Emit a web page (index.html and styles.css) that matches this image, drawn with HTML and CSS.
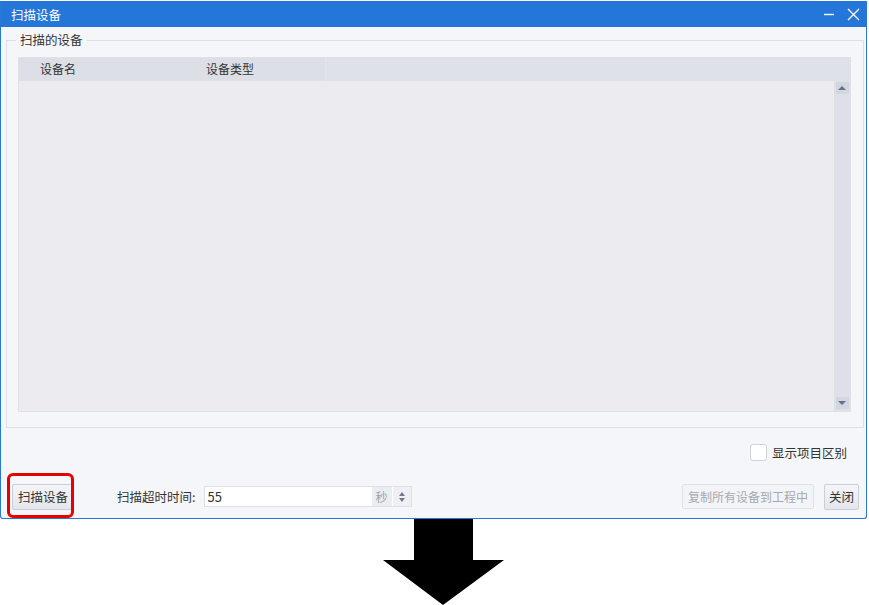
FILE: index.html
```html
<!DOCTYPE html>
<html lang="zh-CN">
<head>
  <meta charset="UTF-8">
  <title>扫描设备</title>
  <link rel="stylesheet" href="styles.css">
</head>
<body>
  <div class="window">
    <div class="titlebar">
      <span class="title">扫描设备</span>
      <div class="title-buttons">
        <svg width="12" height="12" viewBox="0 0 12 12"><path d="M1 6.5h10" stroke="#fff" stroke-width="1.4"/></svg>
        <svg width="13" height="13" viewBox="0 0 13 13"><path d="M1 1l11 11M12 1L1 12" stroke="#fff" stroke-width="1.3"/></svg>
      </div>
    </div>

    <div class="content">
      <fieldset class="group">
        <legend>扫描的设备</legend>
        <div class="table">
          <div class="table-head">
            <div class="col col-name">设备名</div>
            <div class="col col-type">设备类型</div>
            <div class="col col-rest"></div>
          </div>
          <div class="table-body">
            <div class="rows"></div>
            <div class="scrollbar">
              <div class="scroll-btn"><span class="tri-up"></span></div>
              <div class="scroll-btn"><span class="tri-down"></span></div>
            </div>
          </div>
        </div>
      </fieldset>

      <div class="check-row">
        <label class="check"><span class="box"></span>显示项目区别</label>
      </div>

      <div class="footer">
        <div class="scan-wrap">
          <button class="btn">扫描设备</button>
          <div class="highlight"></div>
        </div>
        <span class="timeout-label">扫描超时时间:</span>
        <div class="spin">
          <span class="spin-value">55</span>
          <span class="spin-unit">秒</span>
          <span class="spin-arrows"><span class="tri-up small"></span><span class="tri-down small"></span></span>
        </div>
        <div class="spacer"></div>
        <button class="btn disabled">复制所有设备到工程中</button>
        <button class="btn close">关闭</button>
      </div>
    </div>
  </div>

  <div class="arrow">
    <svg width="122" height="86" viewBox="0 0 122 86">
      <polygon points="31,0 90,0 90,41 121,41 60,86 0,41 31,41" fill="#000"/>
    </svg>
  </div>
</body>
</html>
```

FILE: styles.css
```css
body {
  margin: 0;
  background: #fff;
  font-family: "Noto Sans CJK SC", "Noto Sans", sans-serif;
  font-size: 12px;
  color: #333;
}
.window {
  width: 865px;
  height: 517px;
  border: 1px solid #2a78d6;
  border-top: none;
  border-radius: 0 0 3px 3px;
  background: #f5f6fa;
  margin-top: 1px;
}
.titlebar {
  height: 26px;
  background: #2477d8;
  color: #fff;
  display: flex;
  align-items: center;
  padding: 0 6px 0 10px;
}
.title {
  font-size: 12.5px;
  flex: 1;
}
.title-buttons {
  display: flex;
  align-items: center;
  gap: 12px;
}
.content {
  padding: 5px 2px 0 5px;
}
.group {
  margin: 0;
  border: 1px solid #dde0e6;
  padding: 9px 12px 15px 11px;
}
.group legend {
  padding: 0 4px;
  margin-left: -2px;
  line-height: 16px;
  font-size: 12.5px;
}
.table {
  height: 355px;
  display: flex;
  flex-direction: column;
  border: 1px solid #dfe1e7;
  box-sizing: border-box;
}
.table-head {
  height: 23px;
  display: flex;
  background: #dcdfe6;
  line-height: 22px;
}
.col {
  box-sizing: border-box;
}
.col-name {
  width: 177px;
  padding-left: 21px;
}
.col-type {
  width: 130px;
  padding-left: 10px;
  border-right: 1px solid #e4e6ec;
}
.col-rest {
  flex: 1;
  background: #dee1e8;
}
.table-body {
  flex: 1;
  display: flex;
  background: #ecebef;
}
.rows {
  flex: 1;
}
.scrollbar {
  width: 16px;
  background: #dde0e8;
  display: flex;
  flex-direction: column;
  justify-content: space-between;
  align-items: center;
  padding: 1px 0 2px;
}
.scroll-btn {
  width: 13px;
  height: 12px;
  background: #d2d6df;
  display: flex;
  align-items: center;
  justify-content: center;
}
.tri-up,
.tri-down {
  width: 0;
  height: 0;
  border-left: 4px solid transparent;
  border-right: 4px solid transparent;
}
.tri-up {
  border-bottom: 4px solid #66708a;
}
.tri-down {
  border-top: 4px solid #66708a;
}
.check-row {
  display: flex;
  justify-content: flex-end;
  padding: 16px 17px 0 0;
  height: 17px;
}
.check {
  display: flex;
  align-items: center;
  gap: 5px;
  font-size: 12.5px;
}
.box {
  width: 15px;
  height: 15px;
  background: #fff;
  border: 1px solid #cfd3db;
  border-radius: 3px;
}
.footer {
  display: flex;
  align-items: center;
  margin-top: 22px;
  height: 27px;
  padding-right: 5px;
}
.scan-wrap {
  position: relative;
  margin-left: 6px;
}
.btn {
  font-family: inherit;
  font-size: 12.5px;
  color: #333;
  height: 26px;
  padding: 0 5px;
  background: linear-gradient(#f4f5f8, #e3e6ec);
  border: 1px solid #c9ced8;
  border-radius: 2px;
}
.highlight {
  position: absolute;
  left: -5px;
  top: -11px;
  width: 61px;
  height: 39px;
  border: 3px solid #e60000;
  border-radius: 6px;
}
.timeout-label {
  margin-left: 43px;
  font-size: 12.5px;
}
.spin {
  margin-left: 8px;
  width: 208px;
  height: 21px;
  box-sizing: border-box;
  border: 1px solid #dde0e6;
  background: #fff;
  display: flex;
  align-items: center;
}
.spin-value {
  flex: 1;
  padding-left: 3px;
  font-size: 13px;
}
.spin-unit {
  width: 20px;
  height: 19px;
  line-height: 19px;
  text-align: center;
  background: #ecedf1;
  color: #a0a3aa;
}
.spin-arrows {
  width: 18px;
  height: 19px;
  background: #eef0f3;
  display: flex;
  flex-direction: column;
  align-items: center;
  justify-content: center;
  gap: 2px;
  margin-left: 1px;
}
.tri-up.small {
  border-left-width: 3px;
  border-right-width: 3px;
  border-bottom-width: 4px;
  border-bottom-color: #707a90;
}
.tri-down.small {
  border-left-width: 3px;
  border-right-width: 3px;
  border-top-width: 4px;
  border-top-color: #707a90;
}
.spacer {
  flex: 1;
}
.btn.disabled {
  color: #a6a9b0;
  background: #f3f4f7;
  border-color: #dfe2e8;
  height: 25px;
  padding: 0 5px;
  font-size: 12px;
}
.btn.close {
  margin-left: 10px;
  padding: 0 4px;
}
.arrow {
  padding-left: 383px;
  height: 86px;
  line-height: 0;
}
```
